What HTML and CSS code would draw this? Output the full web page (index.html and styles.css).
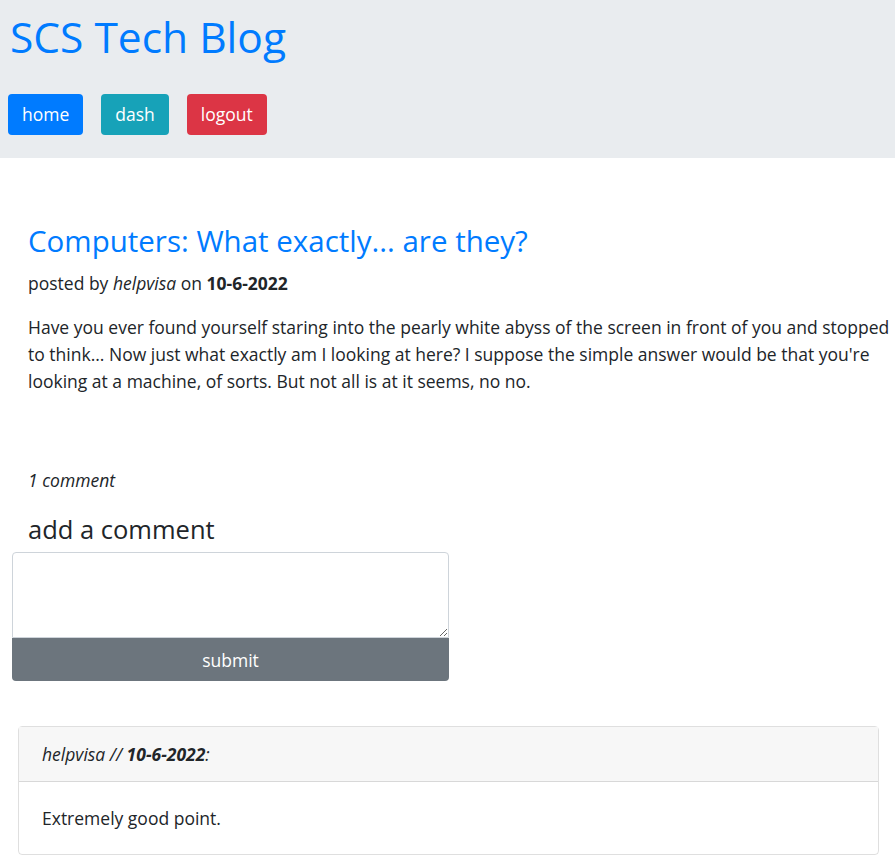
FILE: index.html
```html
<!DOCTYPE html>
<html>
<head>
<meta charset="utf-8">
<link rel="stylesheet" href="styles.css">
</head>
<body>
<header class="top">
  <h1 class="brand">SCS Tech Blog</h1>
  <nav class="nav">
    <a class="btn btn-blue" href="#">home</a>
    <a class="btn btn-teal" href="#">dash</a>
    <a class="btn btn-red" href="#">logout</a>
  </nav>
</header>
<main class="main">
  <article class="post">
    <h2 class="post-title">Computers: What exactly... are they?</h2>
    <p class="meta">posted by <em>helpvisa</em> on <strong>10-6-2022</strong></p>
    <p class="body">Have you ever found yourself staring into the pearly white abyss of the screen in front of you and stopped to think... Now just what exactly am I looking at here? I suppose the simple answer would be that you're looking at a machine, of sorts. But not all is at it seems, no no.</p>
  </article>
  <p class="count"><em>1 comment</em></p>
  <h3 class="add">add a comment</h3>
  <form class="form">
    <textarea class="ta"></textarea>
    <button class="submit" type="button">submit</button>
  </form>
  <div class="card">
    <div class="card-head"><em>helpvisa // <strong>10-6-2022</strong>:</em></div>
    <div class="card-body">Extremely good point.</div>
  </div>
</main>
</body>
</html>
```
FILE: styles.css
```css
* { box-sizing: border-box; }
body {
  margin: 0;
  font-family: "Open Sans", "Noto Sans", sans-serif;
  font-size: 17.5px;
  line-height: 27px;
  color: #212529;
  background: #fff;
}
.top {
  background: #e9ecef;
  height: 158px;
  padding: 8px 8px 0 8px;
}
.brand {
  margin: 0 0 0 2px;
  font-size: 42.5px;
  line-height: 58px;
  font-weight: 400;
  color: #007bff;
}
.nav {
  display: flex;
  gap: 18px;
  margin-top: 28px;
}
.btn {
  display: inline-block;
  height: 41px;
  padding: 6px 14px;
  font-size: 17.5px;
  line-height: 29px;
  color: #fff;
  text-decoration: none;
  border-radius: 4px;
}
.btn-blue { background: #007bff; }
.btn-teal { background: #17a2b8; }
.btn-red { background: #dc3545; }

.main {
  padding: 63px 4px 0 12px;
}
.post { padding: 0 0 0 16px; }
.post-title {
  margin: 0;
  font-size: 29.5px;
  line-height: 40px;
  font-weight: 400;
  color: #007bff;
}
.meta { margin: 9px 0 0 0; }
.body { margin: 17px 0 0 0; }
.count {
  margin: 72px 0 0 16px;
}
.add {
  margin: 17px 0 0 16px;
  font-size: 25.5px;
  line-height: 36px;
  font-weight: 400;
}
.form {
  width: 437px;
  margin-top: 5px;
}
.ta {
  display: block;
  width: 100%;
  height: 86px;
  border: 1px solid #ced4da;
  border-radius: 4px 4px 0 0;
  resize: vertical;
  margin: 0;
}
.submit {
  display: block;
  width: 100%;
  height: 43px;
  border: 0;
  border-radius: 0 0 4px 4px;
  background: #6c757d;
  color: #fff;
  font-family: inherit;
  font-size: 17.5px;
}
.card {
  margin: 45px 0 0 6px;
  width: 861px;
  border: 1px solid rgba(0,0,0,.125);
  border-radius: 4px;
}
.card-head {
  background: #f7f7f7;
  height: 55px;
  padding: 14px 23px;
  border-bottom: 1px solid rgba(0,0,0,.125);
}
.card-body {
  height: 72px;
  padding: 23px 23px;
}
```
